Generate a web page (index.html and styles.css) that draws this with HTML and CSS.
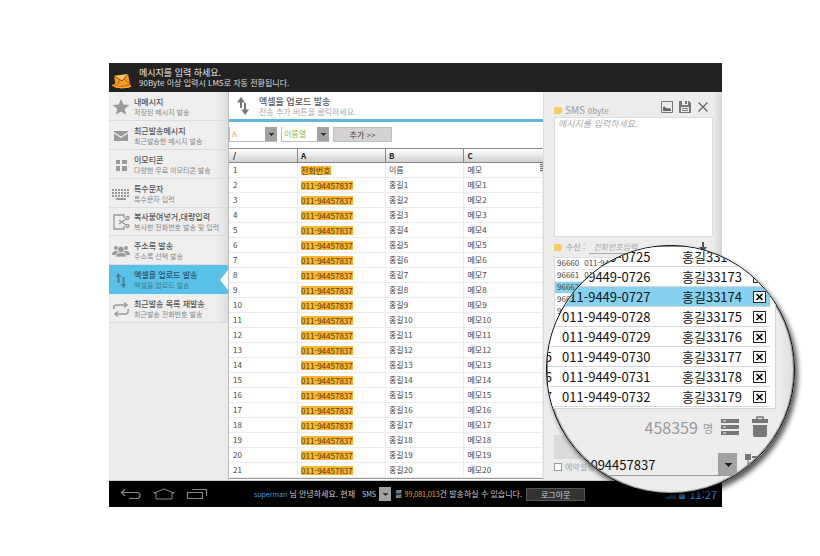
FILE: index.html
```html
<!DOCTYPE html>
<html lang="ko">
<head>
<meta charset="utf-8">
<title>SMS 발송</title>
<link rel="stylesheet" href="styles.css">
</head>
<body>
<div class="app">
  <header class="top">
    <svg class="logo" viewBox="0 0 20 16" width="20" height="16" aria-hidden="true">
      <path d="M1 12 L4 9 L16 9 L19 12 L17 15 L4 15 Z" fill="#c96a10"/>
      <path d="M2 3 L16 1 L18 11 L4 14 Z" fill="#f59a23"/>
      <path d="M2 3 L10 8 L16 1" fill="#ffc45a" stroke="#8a4a0c" stroke-width="1"/>
      <path d="M4 14 L8 7 M18 11 L12 6" stroke="#a85a10" stroke-width=".8"/>
      <path d="M0 12 Q8 17 19 13" fill="none" stroke="#ffae35" stroke-width="1.4"/>
    </svg>
    <div>
      <h1>메시지를 입력 하세요.</h1>
      <p>90Byte 이상 입력시 LMS로 자동 전환됩니다.</p>
    </div>
  </header>

  <div class="body">
    <nav class="side">
      <a href="#inbox"><svg viewBox="0 0 18 18"><path d="M9 1l2.300 5.600 6 .4-4.600 3.900 1.500 5.900L9 13.600l-5.200 3.200 1.500-5.900L.7 7l6-.4z" fill="#999"/></svg><span><b>내메시지</b><small>저장된 메시지 발송</small></span></a>
      <a href="#recent"><svg viewBox="0 0 18 18"><path d="M2 4h14v1L9 9.500 2 5z M2 6.500l7 4.500 7-4.500V14H2z" fill="#999"/></svg><span><b>최근발송메시지</b><small>최근발송한 메시지 발송</small></span></a>
      <a href="#emoticon"><svg viewBox="0 0 18 18"><path d="M4 4h4v4H4z M10 4h5v4h-5z M4 10h4v5H4z M10 10h5v5h-5z" fill="#999"/></svg><span><b>이모티콘</b><small>다양한 무료 이모티콘 발송</small></span></a>
      <a href="#special"><svg viewBox="0 0 18 18"><path d="M0 5h18M0 8h18M0 11h18" stroke="#999" stroke-width="2" stroke-dasharray="2 1"/><path d="M4 14h10" stroke="#999" stroke-width="2"/></svg><span><b>특수문자</b><small>특수문자 입력</small></span></a>
      <a href="#paste"><svg viewBox="0 0 18 18"><g fill="none" stroke="#999" stroke-width="1.300"><path d="M12 5V2H2v14h10v-3"/><path d="M7 7l7 5M7 11l7-5"/><circle cx="15.500" cy="5" r="1.500"/><circle cx="15.500" cy="13" r="1.500"/></g></svg><span><b>복사붙여넣거,대량입력</b><small>복사한 전화번호 발송 및 입력</small></span></a>
      <a href="#contacts"><svg viewBox="0 0 18 18"><g fill="#999"><circle cx="4" cy="6" r="2"/><circle cx="14" cy="6" r="2"/><path d="M0 13q0-4 4-4h2l-2 4z M18 13q0-4-4-4h-2l2 4z"/></g><g fill="#999" stroke="#eee" stroke-width=".7"><path d="M3.500 15q0-4 4-4.500h3q4 .5 4 4.500z"/><circle cx="9" cy="7.500" r="3.200"/></g></svg><span><b>주소록 발송</b><small>주소록 선택 발송</small></span></a>
      <a href="#excel" class="on" aria-current="page"><svg viewBox="0 0 18 18"><path d="M6.500 12V4M11.500 6v9" stroke="#4c7d94" stroke-width="2"/><path d="M3.500 6l3-4 3 4zM8.500 13l3 4 3-4z" fill="#4c7d94"/></svg><span><b>엑셀을 업로드 발송</b><small>엑셀을 업로드 발송</small></span></a>
      <a href="#resend"><svg viewBox="0 0 18 18"><g fill="none" stroke="#999" stroke-width="1.500"><path d="M2 9q-1-4 3-4h9M16 9q1 5-3 5H4"/><path d="M12 2.500L15 5l-3 2.500M6 11.500L3 14l3 2.500"/></g></svg><span><b>최근발송 목록 재발송</b><small>최근발송 전화번호 발송</small></span></a>
    </nav>

    <main class="main">
      <div class="title">
        <svg viewBox="0 0 12 18" width="12" height="18" aria-hidden="true"><path d="M4 11V3M8 6v10" stroke="#777" stroke-width="2"/><path d="M0 5.500L4 0l4 5.500zM4.500 12.500L8 18l4-5.500z" fill="#777"/></svg>
        <div><h2>엑셀을 업로드 발송</h2><p>전송 추가 버튼을 클릭하세요.</p></div>
      </div>
      <div class="tools">
        <span class="pick orange"><select aria-label="전화번호열"><option>A</option></select></span>
        <span class="pick green"><select aria-label="이름열"><option>이름열</option></select></span>
        <button type="button" class="add">추가 &gt;&gt;</button>
      </div>
      <div class="sheet">
        <table>
          <thead><tr><th>/</th><th>A</th><th>B</th><th>C</th></tr></thead>
          <tbody>
            <tr><td>1</td><td><mark>전화번호</mark></td><td>이름</td><td>메모</td></tr>
            <tr><td>2</td><td><mark>011-94457837</mark></td><td>홍길1</td><td>메모1</td></tr>
            <tr><td>3</td><td><mark>011-94457837</mark></td><td>홍길2</td><td>메모2</td></tr>
            <tr><td>4</td><td><mark>011-94457837</mark></td><td>홍길3</td><td>메모3</td></tr>
            <tr><td>5</td><td><mark>011-94457837</mark></td><td>홍길4</td><td>메모4</td></tr>
            <tr><td>6</td><td><mark>011-94457837</mark></td><td>홍길5</td><td>메모5</td></tr>
            <tr><td>7</td><td><mark>011-94457837</mark></td><td>홍길6</td><td>메모6</td></tr>
            <tr><td>8</td><td><mark>011-94457837</mark></td><td>홍길7</td><td>메모7</td></tr>
            <tr><td>9</td><td><mark>011-94457837</mark></td><td>홍길8</td><td>메모8</td></tr>
            <tr><td>10</td><td><mark>011-94457837</mark></td><td>홍길9</td><td>메모9</td></tr>
            <tr><td>11</td><td><mark>011-94457837</mark></td><td>홍길10</td><td>메모10</td></tr>
            <tr><td>12</td><td><mark>011-94457837</mark></td><td>홍길11</td><td>메모11</td></tr>
            <tr><td>13</td><td><mark>011-94457837</mark></td><td>홍길12</td><td>메모12</td></tr>
            <tr><td>14</td><td><mark>011-94457837</mark></td><td>홍길13</td><td>메모13</td></tr>
            <tr><td>15</td><td><mark>011-94457837</mark></td><td>홍길14</td><td>메모14</td></tr>
            <tr><td>16</td><td><mark>011-94457837</mark></td><td>홍길15</td><td>메모15</td></tr>
            <tr><td>17</td><td><mark>011-94457837</mark></td><td>홍길16</td><td>메모16</td></tr>
            <tr><td>18</td><td><mark>011-94457837</mark></td><td>홍길17</td><td>메모17</td></tr>
            <tr><td>19</td><td><mark>011-94457837</mark></td><td>홍길18</td><td>메모18</td></tr>
            <tr><td>20</td><td><mark>011-94457837</mark></td><td>홍길19</td><td>메모19</td></tr>
            <tr><td>21</td><td><mark>011-94457837</mark></td><td>홍길20</td><td>메모20</td></tr>
          </tbody>
        </table>
        <i class="grip"></i>
      </div>
    </main>

    <aside class="panel">
      <div class="phead">
        <i class="tag"></i>
        <label for="msg">SMS <small>0byte</small></label>
        <button type="button" aria-label="이미지"><svg viewBox="0 0 12 12"><path d="M.5 .5h11v11H.5z" fill="none" stroke="#777"/><path d="M2 10V6l1.500-.5L5 7l2 .5L8.500 7 10 8.500V10z" fill="#666"/></svg></button>
        <button type="button" aria-label="저장"><svg viewBox="0 0 12 12"><path d="M0 0h10l2 2v10H0z" fill="#777"/><path d="M3 0h6v4H3zM2 6h8v5H2z" fill="#ececec"/><path d="M6 0h2v3H6zM3 7h6v1H3zM3 9h6v1H3z" fill="#777"/></svg></button>
        <button type="button" aria-label="닫기"><svg viewBox="0 0 12 12"><path d="M1.500 1.500l9 9M10.500 1.500l-9 9" stroke="#666" stroke-width="1.300"/></svg></button>
      </div>
      <textarea id="msg" placeholder="메시지를 입력하세요."></textarea>
      <div class="to">
        <i class="tag"></i>
        <label for="to">수신 :</label>
        <input id="to" type="text" placeholder="전화번호입력">
        <button type="button" aria-label="추가"><svg viewBox="0 0 8 10"><path d="M4 0v7" stroke="#555" stroke-width="2"/><path d="M0 5h8L4 10z" fill="#555"/></svg></button>
      </div>
      <ul class="nums">
        <li><span>96660</span><span>011-9449</span></li>
        <li><span>96661</span><span>011</span></li>
        <li class="on"><span>96662</span></li>
        <li><span>96663</span></li>
        <li><span>96664</span></li>
      </ul>
      <button type="button" class="send" aria-label="발송"></button>
      <label class="book"><input type="checkbox">예약설정</label>
    </aside>
  </div>

  <footer class="bar">
    <div class="keys">
      <button type="button" aria-label="뒤로"><svg viewBox="0 0 22 12"><path d="M5 1L1.500 4.500 5 8M2 4.500h15q3 0 3 3t-3 3H9" fill="none" stroke="#888" stroke-width="1.200"/></svg></button>
      <button type="button" aria-label="홈"><svg viewBox="0 0 22 12"><path d="M1 5L11 1l10 4h-2v6H3V5z" fill="none" stroke="#888"/></svg></button>
      <button type="button" aria-label="최근"><svg viewBox="0 0 22 12"><path d="M1.500 4.500h15v6h-15zM6 1.500h14.500V8" fill="none" stroke="#888" stroke-width="1.200"/></svg></button>
    </div>
    <p class="hello"><span class="blue">superman</span> 님 안녕하세요. 현재</p>
    <span class="kind"><select aria-label="종류"><option>SMS</option></select></span>
    <p>를 <span class="gold">99,081,013</span>건 발송하실 수 있습니다.</p>
    <button type="button" class="logout">로그아웃</button>
    <div class="clock">
      <svg viewBox="0 0 20 10" width="20" height="10" aria-hidden="true"><path d="M1 10V8M3 10V7M5 10V5M7 10V3M9 10V1" stroke="#2b6ea5"/><path d="M14 2h5v2h-5zM13 5h6v5h-6z" fill="#2b7fc4"/></svg>
      <time>11:27</time>
    </div>
  </footer>

  <section class="lens">
    <ul>
      <li><i></i><span>011-9449-0725</span><span>홍길33172</span></li>
      <li><i></i><span>011-9449-0726</span><span>홍길33173</span><button type="button" aria-label="삭제"><svg viewBox="0 0 11 10"><path d="M2.500 2l6 6M8.500 2l-6 6" stroke="#000" stroke-width="1.600"/></svg></button></li>
      <li class="on"><i></i><span>011-9449-0727</span><span>홍길33174</span><button type="button" aria-label="삭제"><svg viewBox="0 0 11 10"><path d="M2.500 2l6 6M8.500 2l-6 6" stroke="#000" stroke-width="1.600"/></svg></button></li>
      <li><i></i><span>011-9449-0728</span><span>홍길33175</span><button type="button" aria-label="삭제"><svg viewBox="0 0 11 10"><path d="M2.500 2l6 6M8.500 2l-6 6" stroke="#000" stroke-width="1.600"/></svg></button></li>
      <li><i></i><span>011-9449-0729</span><span>홍길33176</span><button type="button" aria-label="삭제"><svg viewBox="0 0 11 10"><path d="M2.500 2l6 6M8.500 2l-6 6" stroke="#000" stroke-width="1.600"/></svg></button></li>
      <li><i>5</i><span>011-9449-0730</span><span>홍길33177</span><button type="button" aria-label="삭제"><svg viewBox="0 0 11 10"><path d="M2.500 2l6 6M8.500 2l-6 6" stroke="#000" stroke-width="1.600"/></svg></button></li>
      <li><i>6</i><span>011-9449-0731</span><span>홍길33178</span><button type="button" aria-label="삭제"><svg viewBox="0 0 11 10"><path d="M2.500 2l6 6M8.500 2l-6 6" stroke="#000" stroke-width="1.600"/></svg></button></li>
      <li><i>7</i><span>011-9449-0732</span><span>홍길33179</span><button type="button" aria-label="삭제"><svg viewBox="0 0 11 10"><path d="M2.500 2l6 6M8.500 2l-6 6" stroke="#000" stroke-width="1.600"/></svg></button></li>
    </ul>
    <div class="count">
      <span>458359</span><small>명</small>
      <button type="button" aria-label="목록"><svg viewBox="0 0 18 16" width="18" height="16"><path d="M0 0h18v4H0zM0 6h18v4H0zM0 12h18v4H0z" fill="#777"/><path d="M2 2h3M2 8h3M2 14h3" stroke="#eee"/></svg></button>
      <button type="button" aria-label="비우기"><svg viewBox="0 0 16 22" width="16" height="22"><path d="M5 3V1h6v2" fill="none" stroke="#777" stroke-width="1.500"/><path d="M0 3h16v4H0zM1 9h14v10q0 2-2 2H3q-2 0-2-2z" fill="#777"/></svg></button>
    </div>
    <div class="from">
      <select aria-label="발신번호"><option>01094457837</option></select>
      <svg viewBox="0 0 18 16" width="18" height="16" aria-hidden="true"><path d="M0 0h6v6H0zM7 2h11v2H7zM7 8h10v3H7z" fill="#777"/><path d="M3 5v9h5M3 9h5" fill="none" stroke="#777"/></svg>
    </div>
  </section>
</div>
</body>
</html>
```
FILE: styles.css
```css
* { box-sizing: border-box; margin: 0; padding: 0; }
body {
  padding: 63px 98px 48px 109px;
  background: #fff;
  color: #444;
  font-family: "Noto Sans CJK KR", "Liberation Sans", sans-serif;
  font-size: 8px;
  line-height: 10px;
}
button, input, select, textarea { font: inherit; color: inherit; border: 0; background: none; border-radius: 0; appearance: none; }
button svg { display: block; }
ul { list-style: none; }
small { font-size: inherit; }

.app { position: relative; white-space: nowrap; }

.top { display: flex; gap: 7px; height: 29px; padding: 4px 3px 0; background: #222; color: #ddd; }
.logo { margin-top: 6px; }
.top h1 { font-size: 9px; font-weight: 400; line-height: 11px; color: #eee; }

.body { display: flex; background: #ececec; }

.side {
  display: grid;
  grid-template-rows: repeat(8, 1fr);
  flex: 0 0 119px;
  height: 231px;
}
.side a {
  position: relative;
  display: flex;
  align-items: center;
  gap: 4px;
  padding: 2px 0 0 3px;
  border-bottom: 1px solid #dcdcdc;
  background: linear-gradient(90deg, #eee 90%, #ddd);
  color: #555;
  text-decoration: none;
}
.side svg { width: 18px; height: 18px; }
.side b { display: block; font-weight: 500; }
.side small { display: block; font-size: 7px; color: #888; }
.side a.on { background: #57c1e8; color: #2f5364; border-color: #57c1e8; }
.side a.on small { color: #4b7b90; }
.side a.on::after {
  content: "";
  position: absolute;
  top: 5px;
  right: 0;
  border: 10px solid transparent;
  border-right: 8px solid #fff;
  border-left: 0;
}

.main { flex: 1; min-width: 0; padding-bottom: 1px; background: #fff; border-left: 1px solid #bbb; }
.title { display: flex; gap: 10px; height: 30px; padding: 4px 0 0 8px; border-bottom: 3px solid #5bb8e0; }
.title svg { margin-top: 1px; }
.title h2 { font-size: 9px; font-weight: 500; line-height: 11px; color: #555; }
.title p { color: #aaa; }
.tools { display: flex; gap: 4px; height: 26px; padding-top: 5px; }
.pick { position: relative; width: 48px; height: 15px; border: solid #bbb; border-width: 0 0 1px 1px; }
.pick select { width: 100%; height: 14px; padding-left: 2px; }
.pick::after, .kind::after {
  content: "";
  position: absolute;
  top: 0;
  right: 0;
  width: 12px;
  height: 14px;
  background: linear-gradient(#333, #333) 4px 6px / 5px 1px no-repeat, linear-gradient(#333, #333) 5px 7px / 3px 1px no-repeat, linear-gradient(#333, #333) 6px 8px / 1px 1px no-repeat, #a2a2a2;
  pointer-events: none;
}
.orange { color: #f7a13c; }
.green { color: #8cb84a; }
.add { width: 59px; height: 15px; background: #d3d3d3; border: 1px solid #bfbfbf; }

.sheet { position: relative; border-bottom: 1px solid #999; }
table { width: 100%; table-layout: fixed; border-collapse: separate; border-spacing: 0; }
th { height: 15px; padding-left: 4px; text-align: left; font-weight: 700; color: #222; background: linear-gradient(#fff, #d0d0d0); border: solid #888; border-width: 1px 1px 1px 0; }
th:last-child { border-right: 0; }
th:nth-child(1) { width: 22%; }
th:nth-child(2) { width: 28%; }
th:nth-child(3) { width: 25%; }
td { height: 15px; padding-left: 4px; border: solid #ececec; border-width: 0 1px 1px 0; }
th + th, td + td { padding-left: 3px; }
mark { background: #fdb52d; color: #4a3a10; line-height: 9px; display: inline-block; height: 9px; vertical-align: middle; }
.grip { position: absolute; top: 14px; right: 0; width: 3px; height: 10px; background: repeating-linear-gradient(#777 0 1px, #ddd 1px 2px); }

.panel { flex: 0 0 179px; padding: 8px 9px 0 10px; background: linear-gradient(90deg, #ececec 95%, #d4d4d4); border-left: 1px solid #ddd; }
.phead { display: flex; align-items: center; gap: 6px; height: 17px; padding-right: 4px; color: #999; }
.phead label { flex: 1; padding-top: 3px; font-size: 10px; }
.phead small { font-size: 8px; }
.phead button { width: 12px; height: 12px; margin-bottom: 3px; }
.phead .tag { margin-right: -3px; margin-top: 4px; }
.tag { flex: none; width: 8px; height: 7px; background: #f9cb5f; border-radius: 0 3px 3px 0; }
#msg { display: block; width: 100%; height: 120px; padding: 1px 3px; background: #fff; border: 1px solid #ddd; font-size: 9px; resize: none; outline: 0; }
::placeholder { color: #aaa; font-style: italic; opacity: 1; }
.to { display: flex; align-items: center; gap: 4px; height: 20px; color: #999; }
.to input { flex: 1; min-width: 0; height: 14px; padding-left: 4px; border-bottom: 1px solid #aaa; }
.to button { width: 8px; height: 10px; margin-right: 6px; }
.nums { background: #fff; border: 1px solid #ddd; height: 152px; }
.nums li { display: flex; gap: 5px; height: 12px; padding-left: 2px; border-bottom: 1px solid #eee; }
.nums .on { background: #86d1ef; }
.send { display: block; width: 100%; height: 24px; margin-top: 26px; background: #dadada; }
.book { display: flex; align-items: center; gap: 3px; height: 16px; color: #aaa; }
.book input { width: 8px; height: 8px; background: #fff; border: 1px solid #999; }

.bar { display: flex; align-items: center; height: 27px; padding: 0 5px 0 11px; border-top: 1px solid #ccc; background: #000; color: #ccc; }
.keys { display: flex; gap: 11px; margin-right: 46px; }
.keys button { width: 22px; height: 12px; }
.blue { color: #3f9be0; font-size: 7px; }
.gold { color: #f0a030; font-size: 7px; }
.kind { position: relative; width: 29px; height: 14px; margin: 0 4px 0 7px; font-size: 7px; }
.kind select { width: 100%; height: 14px; }
.logout { width: 59px; height: 13px; margin-left: 4px; background: #333; border: 1px solid #555; line-height: 9px; }
.clock { display: flex; align-items: center; gap: 4px; margin-left: auto; color: #3a8fd0; font-size: 11px; }

.lens {
  position: absolute;
  right: -73px;
  bottom: 13px;
  width: 249px;
  height: 249px;
  padding: 1px;
  overflow: hidden;
  border: 1px solid #000;
  border-radius: 50%;
  background: linear-gradient(90deg, #ececec 94%, #ddd);
  box-shadow: 3px 4px 5px rgba(0, 0, 0, .65), inset 0 0 1px 1px rgba(0, 0, 0, .4);
  color: #111;
  font-size: 13px;
  line-height: 19px;
}
.lens ul { margin-right: 17px; padding: 0 5px 1px 0; background: #fff; border: solid #d5d5d5; border-width: 0 1px 1px 0; }
.lens li { display: grid; grid-template-columns: 4px 110px 61px 13px; column-gap: 10px; align-items: center; height: 20px; border-bottom: 1px solid #d5d5d5; }
.lens li i { display: flex; justify-content: flex-end; font-style: normal; }
.lens li.on { background: #86d1ef; }
.lens li button { width: 13px; height: 12px; background: #fff; border: 1px solid #222; }
.count { display: flex; align-items: center; justify-content: flex-end; height: 36px; padding-right: 25px; color: #999; font-size: 16px; }
.count small { margin: 3px 8px 0 5px; font-size: 11px; }
.count button + button { margin-left: 13px; }
.from { display: flex; align-items: center; gap: 8px; margin-top: 8px; padding-left: 28px; }
.from svg { margin-bottom: 6px; }
.from select {
  width: 161px;
  height: 23px;
  border-bottom: 1px solid #999;
  background: linear-gradient(#222, #222) 149px 10px / 7px 1px no-repeat, linear-gradient(#222, #222) 150px 11px / 5px 1px no-repeat, linear-gradient(#222, #222) 151px 12px / 3px 1px no-repeat, linear-gradient(#222, #222) 152px 13px / 1px 1px no-repeat, linear-gradient(#a2a2a2, #a2a2a2) right / 19px 100% no-repeat;
}
```
